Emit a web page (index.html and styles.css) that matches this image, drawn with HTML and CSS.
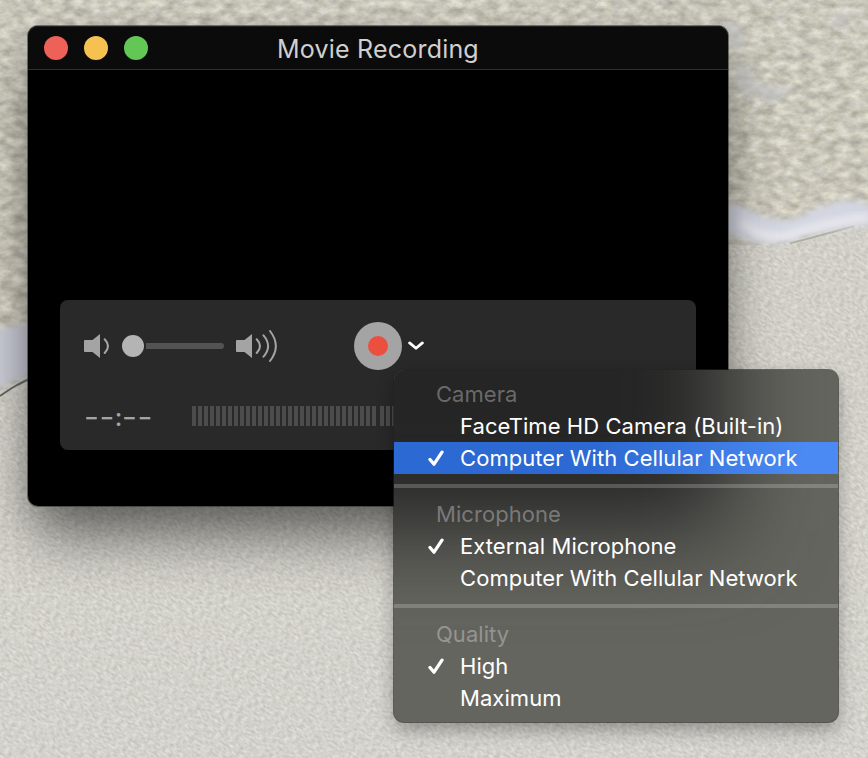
FILE: index.html
```html
<!DOCTYPE html>
<html lang="en">
<head>
<meta charset="utf-8">
<title>Movie Recording</title>
<link rel="stylesheet" href="styles.css">
</head>
<body>
<svg class="wallpaper" viewBox="0 0 868 758" aria-hidden="true">
  <defs>
    <linearGradient id="water" x1="0" y1="0" x2="0" y2="1">
      <stop offset="0" stop-color="#cac9be"/><stop offset=".45" stop-color="#cac3b4"/>
    </linearGradient>
    <linearGradient id="sand" x1="0" y1="0" x2="0" y2="1">
      <stop offset=".25" stop-color="#cecbbf"/><stop offset="1" stop-color="#d3d2cd"/>
    </linearGradient>
    <filter id="ripple" x="0" y="0" width="100%" height="100%" color-interpolation-filters="sRGB">
      <feTurbulence type="fractalNoise" baseFrequency="0.08 0.13" numOctaves="5" seed="21"/>
      <feColorMatrix values="0.5 0 0 0 0.54  0.5 0 0 0 0.53  0.5 0 0.08 0 0.44  0 0 0 0 1"/>
    </filter>
    <filter id="grain" x="0" y="0" width="100%" height="100%" color-interpolation-filters="sRGB">
      <feTurbulence type="fractalNoise" baseFrequency="0.22 0.42" numOctaves="3" seed="4"/>
      <feColorMatrix values="0.36 0 0 0 0.65  0.36 0 0 0 0.645  0.39 0 0 0 0.605  0 0 0 0 1"/>
    </filter>
    <filter id="soft" x="-10%" y="-30%" width="120%" height="160%"><feGaussianBlur stdDeviation="3"/></filter>
    <filter id="fine"><feGaussianBlur stdDeviation=".7"/></filter>
    <clipPath id="shore"><path d="M0 391Q14 383 28 378L720 244Q760 248 790 242L868 218V758H0Z"/></clipPath>
  </defs>
  <rect width="868" height="758" fill="url(#water)"/>
  <rect width="868" height="400" filter="url(#ripple)" opacity=".65"/>
  <g fill="#c4c5c6" opacity=".65" filter="url(#soft)">
    <path d="M738 62l16 8 5 22-10 8-14-20zM755 82l30 4 6 8-20 10-14-8zM838 14l15 0-10 15-10-4zM720 22l20 4 4 26-14-6z"/>
  </g>
  <g clip-path="url(#shore)">
    <rect width="868" height="758" fill="url(#sand)"/>
    <g transform="rotate(35 434 379)" opacity=".6"><rect x="-200" y="-300" width="1268" height="1360" filter="url(#grain)"/></g>
  </g>
  <path d="M0 396Q10 389 17 385L29 379" fill="none" stroke="#5d6357" stroke-width="2" filter="url(#fine)"/>
  <path d="M790 243Q815 237 854 226" fill="none" stroke="#a4a294" stroke-width="2" filter="url(#fine)"/>
  <path d="M-10 332Q10 324 40 322V373Q20 377 -10 394Z" fill="#cbcdd7" filter="url(#soft)"/>
  <path d="M715 208Q737 200 755 213Q776 225 800 217Q828 201 850 200L880 206V222L850 227Q818 231 790 240Q760 247 735 235L715 237Z" fill="#d3d6e1" filter="url(#soft)"/>
  <path d="M740 222Q762 240 787 236Q820 224 868 217" fill="none" stroke="#e6e6ec" stroke-width="9" filter="url(#soft)"/>
</svg>

<main class="window">
  <header class="titlebar">
    <div class="lights"><i class="light close"></i><i class="light minimize"></i><i class="light zoom"></i></div>
    <h1 class="title">Movie Recording</h1>
  </header>
  <section class="preview">
    <div class="controls">
      <div class="row transport">
        <svg class="speaker" width="26" height="34" viewBox="0 0 26 34">
          <path d="M1 11H8.500L16 5V29L8.500 23H1Q0 23 0 22V12Q0 11 1 11Z" fill="#a4a4a4"/>
          <path d="M20.700 10.200Q27.300 17 20.700 24" class="wave"/>
        </svg>
        <div class="slider"><span class="knob"></span><span class="track"></span></div>
        <svg class="speaker loud" width="44" height="34" viewBox="0 0 44 34">
          <path d="M1 11H8.500L16 5V29L8.500 23H1Q0 23 0 22V12Q0 11 1 11Z" fill="#a4a4a4"/>
          <path d="M20.700 10.200Q27.300 17 20.700 24M27.500 6.300Q36.700 17 27.500 27.700M34 2Q45.700 17 34 32" class="wave"/>
        </svg>
        <button class="record" aria-label="Record"><span></span></button>
        <svg class="chevron" width="16" height="10" viewBox="0 0 16 10"><path d="M1.600 1.900L8 7.300L14.400 1.900" fill="none" stroke="#fff" stroke-width="2.800" stroke-linecap="round" stroke-linejoin="round"/></svg>
      </div>
      <div class="row status">
        <span class="time"><span class="dashes">--</span><span class="colon">:</span><span class="dashes">--</span></span>
        <div class="meters"><span class="meter"></span><span class="meter"></span></div>
      </div>
    </div>
  </section>
</main>

<nav class="menu">
  <div class="vibrancy"></div>
  <section class="group">
    <h2 class="heading">Camera</h2>
    <div class="item"><span>FaceTime HD Camera (Built-in)</span></div>
    <div class="item checked selected"><svg class="check" width="16" height="17" viewBox="0 0 16 17"><path d="M2 9.500L6 14.200L14 2.200"/></svg><span>Computer With Cellular Network</span></div>
  </section>
  <section class="group">
    <h2 class="heading">Microphone</h2>
    <div class="item checked"><svg class="check" width="16" height="17" viewBox="0 0 16 17"><path d="M2 9.500L6 14.200L14 2.200"/></svg><span>External Microphone</span></div>
    <div class="item"><span>Computer With Cellular Network</span></div>
  </section>
  <section class="group">
    <h2 class="heading">Quality</h2>
    <div class="item checked"><svg class="check" width="16" height="17" viewBox="0 0 16 17"><path d="M2 9.500L6 14.200L14 2.200"/></svg><span>High</span></div>
    <div class="item"><span>Maximum</span></div>
  </section>
</nav>
</body>
</html>
```
FILE: styles.css
```css
* { box-sizing: border-box; }
body {
  margin: 0;
  width: 868px;
  height: 758px;
  overflow: hidden;
  position: relative;
  display: flow-root;
  background: #cecdc5;
  font-family: Inter, "Liberation Sans", sans-serif;
}
.wallpaper { position: absolute; inset: 0; width: 868px; height: 758px; }

.window {
  position: relative;
  width: 700px;
  height: 480px;
  margin: 26px 0 0 28px;
  display: flex;
  flex-direction: column;
  border-radius: 10px;
  background: #000;
  box-shadow: 0 0 0 1px rgba(45, 45, 40, .55), 0 40px 56px -8px rgba(0, 0, 0, .48), 0 8px 34px rgba(0, 0, 0, .18);
}
.titlebar {
  display: grid;
  grid-template-columns: 1fr auto 1fr;
  align-items: center;
  height: 44px;
  padding: 0 16px;
  border-bottom: 1px solid #2e2e2e;
  border-radius: 10px 10px 0 0;
  background: #0b0b0b;
  box-shadow: inset 0 1px #202020;
}
.lights { display: flex; gap: 16px; }
.light { width: 24px; height: 24px; border-radius: 50%; }
.close { background: #ed6158; }
.minimize { background: #f6c150; }
.zoom { background: #62c755; }
.title { margin: 3px 0 0; font-size: 25px; line-height: 30px; font-weight: 400; letter-spacing: .2px; color: #d0d0d0; }

.preview { flex: 1; display: flex; align-items: flex-end; padding: 0 32px 56px; }
.controls { width: 636px; height: 150px; padding: 22px 24px; border-radius: 8px; background: #292929; }
.row { display: flex; align-items: center; }
.transport { height: 48px; }
.speaker { flex: none; }
.wave { fill: none; stroke: #a4a4a4; stroke-width: 2; stroke-linecap: round; }
.slider { display: flex; align-items: center; gap: 2px; margin: 0 12px; }
.knob { width: 22px; height: 22px; border-radius: 50%; background: #b4b4b4; }
.track { width: 78px; height: 6px; border-radius: 0 3px 3px 0; background: #535353; }
.record {
  display: grid;
  place-items: center;
  width: 48px;
  height: 48px;
  margin: 0 6px 0 74px;
  padding: 0;
  border: 0;
  border-radius: 50%;
  background: #a4a4a4;
}
.record span { width: 20px; height: 20px; border-radius: 50%; background: #eb4f3d; }
.status { height: 20px; margin-top: 36px; }
.time { display: flex; align-items: center; width: 108px; padding-top: 1px; font-size: 25px; line-height: 20px; font-weight: 500; color: #a4a4a4; }
.dashes { width: 31px; letter-spacing: .3px; transform: scaleX(1.3); transform-origin: 0 50%; }
.colon { width: 7px; display: flex; justify-content: center; }
.meters { display: flex; gap: 4px; }
.meter { width: 184px; height: 20px; background: repeating-linear-gradient(90deg, #4c4c4c 0 4px, transparent 4px 6px); }

.menu {
  position: absolute;
  left: 394px;
  top: 370px;
  width: 444px;
  height: 352px;
  padding: 8px 0;
  border-radius: 10px;
  background: #65655f;
  isolation: isolate;
  box-shadow: 0 0 0 1px rgba(35, 35, 32, .6), 0 8px 18px rgba(0, 0, 0, .32);
  font-size: 22px;
  line-height: 32px;
  color: #fff;
}
/* Blurred silhouette of the dark window seen through the menu. */
.vibrancy { position: absolute; inset: 0; z-index: -1; overflow: hidden; border-radius: inherit; }
.vibrancy::before {
  content: "";
  position: absolute;
  left: -300px;
  top: -300px;
  width: 634px;
  height: 460px;
  background: #252525;
  filter: blur(48px);
}
.group + .group { margin-top: 10px; padding-top: 10px; border-top: 4px solid rgba(255, 255, 255, .2); }
.heading { margin: 0; padding-left: 42px; font-size: inherit; font-weight: 400; letter-spacing: .05px; color: rgba(255, 255, 255, .33); }
.item { display: flex; align-items: center; height: 32px; padding-left: 66px; letter-spacing: .06px; white-space: nowrap; }
.checked { padding-left: 34px; }
.check { margin-right: 16px; fill: none; stroke: #fff; stroke-width: 3.3; stroke-linecap: round; stroke-linejoin: round; }
.selected { background: linear-gradient(100deg, #2c69d2 45%, #4b89f3 92%); }
```
